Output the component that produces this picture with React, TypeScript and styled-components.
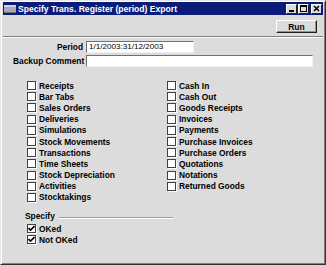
import React from "react";
import styled, { createGlobalStyle } from "styled-components";

const GlobalStyle = createGlobalStyle`
  html, body {
    margin: 0;
    padding: 0;
    background: #d6d6d6;
  }
  * {
    box-sizing: border-box;
  }
`;

const FACE = "#dcdcdc";

const Window = styled.div`
  width: 326px;
  height: 265px;
  background: ${FACE};
  border-top: 1px solid #e8e8e8;
  border-left: 1px solid #e8e8e8;
  border-right: 1px solid #303030;
  border-bottom: 1px solid #303030;
  box-shadow: inset 1px 1px 0 #ffffff, inset -1px -1px 0 #808080;
  padding: 1px 2px 2px 2px;
  display: flex;
  flex-direction: column;
  font-family: "Liberation Sans", Arial, sans-serif;
`;

const TitleBar = styled.div`
  height: 13px;
  background: #0a1c78;
  display: flex;
  align-items: center;
  padding: 0 1px 0 1px;
  gap: 2px;
`;

const TitleIcon = styled.div`
  width: 12px;
  height: 8px;
  background: #a8a8b8;
  border-top: 2px solid #d0d0e0;
  border-bottom: 1px solid #707080;
`;

const TitleText = styled.div`
  flex: 1;
  color: #ffffff;
  font-weight: bold;
  font-size: 8.6px;
  white-space: nowrap;
`;

const TitleButtons = styled.div`
  display: flex;
  gap: 1px;
`;

const TitleButton = styled.div<{ $gap?: boolean }>`
  width: 11px;
  height: 10px;
  margin-left: ${({ $gap }) => ($gap ? 1 : 0)}px;
  background: ${FACE};
  border-top: 1px solid #ffffff;
  border-left: 1px solid #ffffff;
  border-right: 1px solid #202020;
  border-bottom: 1px solid #202020;
  display: flex;
  align-items: center;
  justify-content: center;
`;

const Toolbar = styled.div`
  height: 22px;
  display: flex;
  justify-content: flex-end;
  align-items: flex-end;
  padding: 0 6px 3px 0;
  border-bottom: 1px solid #808080;
  box-shadow: 0 1px 0 #ffffff;
`;

const RunButton = styled.button`
  width: 41px;
  height: 13px;
  padding: 0;
  background: ${FACE};
  border-top: 1px solid #ffffff;
  border-left: 1px solid #ffffff;
  border-right: 1px solid #202020;
  border-bottom: 1px solid #202020;
  box-shadow: inset -1px -1px 0 #909090;
  font-family: "Liberation Sans", Arial, sans-serif;
  font-weight: bold;
  font-size: 8.5px;
  color: #000;
`;

const Body = styled.div`
  flex: 1;
  padding: 4px 0 0 10px;
`;

const FieldGrid = styled.div`
  display: grid;
  grid-template-columns: 70px 1fr;
  column-gap: 3px;
  row-gap: 2px;
  align-items: center;
`;

const Label = styled.div`
  text-align: right;
  font-weight: bold;
  font-size: 8.4px;
  color: #000;
  white-space: nowrap;
`;

const Input = styled.div<{ $width: number }>`
  width: ${({ $width }) => $width}px;
  height: 12px;
  background: #ffffff;
  border-top: 1px solid #707070;
  border-left: 1px solid #707070;
  border-right: 1px solid #f0f0f0;
  border-bottom: 1px solid #f0f0f0;
  font-size: 8.1px;
  line-height: 10px;
  padding-left: 2px;
  color: #000;
  white-space: nowrap;
`;

const Columns = styled.div`
  display: grid;
  grid-template-columns: 140px 140px;
  margin: 13px 0 0 14px;
`;

const Column = styled.div`
  display: flex;
  flex-direction: column;
`;

const CheckRow = styled.div`
  height: 11.2px;
  display: flex;
  align-items: center;
  gap: 3px;
`;

const Box = styled.div`
  width: 9px;
  height: 9px;
  background: #ffffff;
  border: 1px solid #404040;
  box-shadow: 1px 1px 0 #ffffff;
  display: flex;
  align-items: center;
  justify-content: center;
`;

const CheckText = styled.span`
  font-weight: bold;
  font-size: 8.4px;
  color: #000;
  white-space: nowrap;
`;

const SpecifyHeader = styled.div`
  display: flex;
  align-items: center;
  gap: 4px;
  margin: 8px 0 2px 12px;
  width: 148px;
`;

const HeaderLine = styled.div`
  flex: 1;
  height: 2px;
  border-top: 1px solid #a0a0a0;
  border-bottom: 1px solid #ffffff;
  margin-top: 4px;
`;

const SpecifyList = styled.div`
  margin-left: 14px;
  display: flex;
  flex-direction: column;
`;

const Check: React.FC<{ label: string; checked?: boolean }> = ({ label, checked }) => (
  <CheckRow>
    <Box>
      {checked && (
        <svg width="7" height="7" viewBox="0 0 7 7">
          <path d="M0.5 3 L2.5 5 L6.5 1" stroke="#000" strokeWidth="1.6" fill="none" />
        </svg>
      )}
    </Box>
    <CheckText>{label}</CheckText>
  </CheckRow>
);

const leftItems = [
  "Receipts",
  "Bar Tabs",
  "Sales Orders",
  "Deliveries",
  "Simulations",
  "Stock Movements",
  "Transactions",
  "Time Sheets",
  "Stock Depreciation",
  "Activities",
  "Stocktakings",
];

const rightItems = [
  "Cash In",
  "Cash Out",
  "Goods Receipts",
  "Invoices",
  "Payments",
  "Purchase Invoices",
  "Purchase Orders",
  "Quotations",
  "Notations",
  "Returned Goods",
];

export default function App() {
  return (
    <>
      <GlobalStyle />
      <Window>
        <TitleBar>
          <TitleIcon />
          <TitleText>Specify Trans. Register (period) Export</TitleText>
          <TitleButtons>
            <TitleButton>
              <svg width="7" height="7" viewBox="0 0 7 7">
                <rect x="1" y="5" width="5" height="2" fill="#000" />
              </svg>
            </TitleButton>
            <TitleButton>
              <svg width="7" height="7" viewBox="0 0 7 7">
                <rect x="0.5" y="0.5" width="6" height="6" fill="none" stroke="#000" />
                <rect x="0" y="0" width="7" height="2" fill="#000" />
              </svg>
            </TitleButton>
            <TitleButton $gap>
              <svg width="7" height="7" viewBox="0 0 7 7">
                <path d="M1 1 L6 6 M6 1 L1 6" stroke="#000" strokeWidth="1.5" />
              </svg>
            </TitleButton>
          </TitleButtons>
        </TitleBar>
        <Toolbar>
          <RunButton>Run</RunButton>
        </Toolbar>
        <Body>
          <FieldGrid>
            <Label>Period</Label>
            <Input $width={108}>1/1/2003:31/12/2003</Input>
            <Label>Backup Comment</Label>
            <Input $width={227} />
          </FieldGrid>
          <Columns>
            <Column>
              {leftItems.map((item) => (
                <Check key={item} label={item} />
              ))}
            </Column>
            <Column>
              {rightItems.map((item) => (
                <Check key={item} label={item} />
              ))}
            </Column>
          </Columns>
          <SpecifyHeader>
            <CheckText>Specify</CheckText>
            <HeaderLine />
          </SpecifyHeader>
          <SpecifyList>
            <Check label="OKed" checked />
            <Check label="Not OKed" checked />
          </SpecifyList>
        </Body>
      </Window>
    </>
  );
}
